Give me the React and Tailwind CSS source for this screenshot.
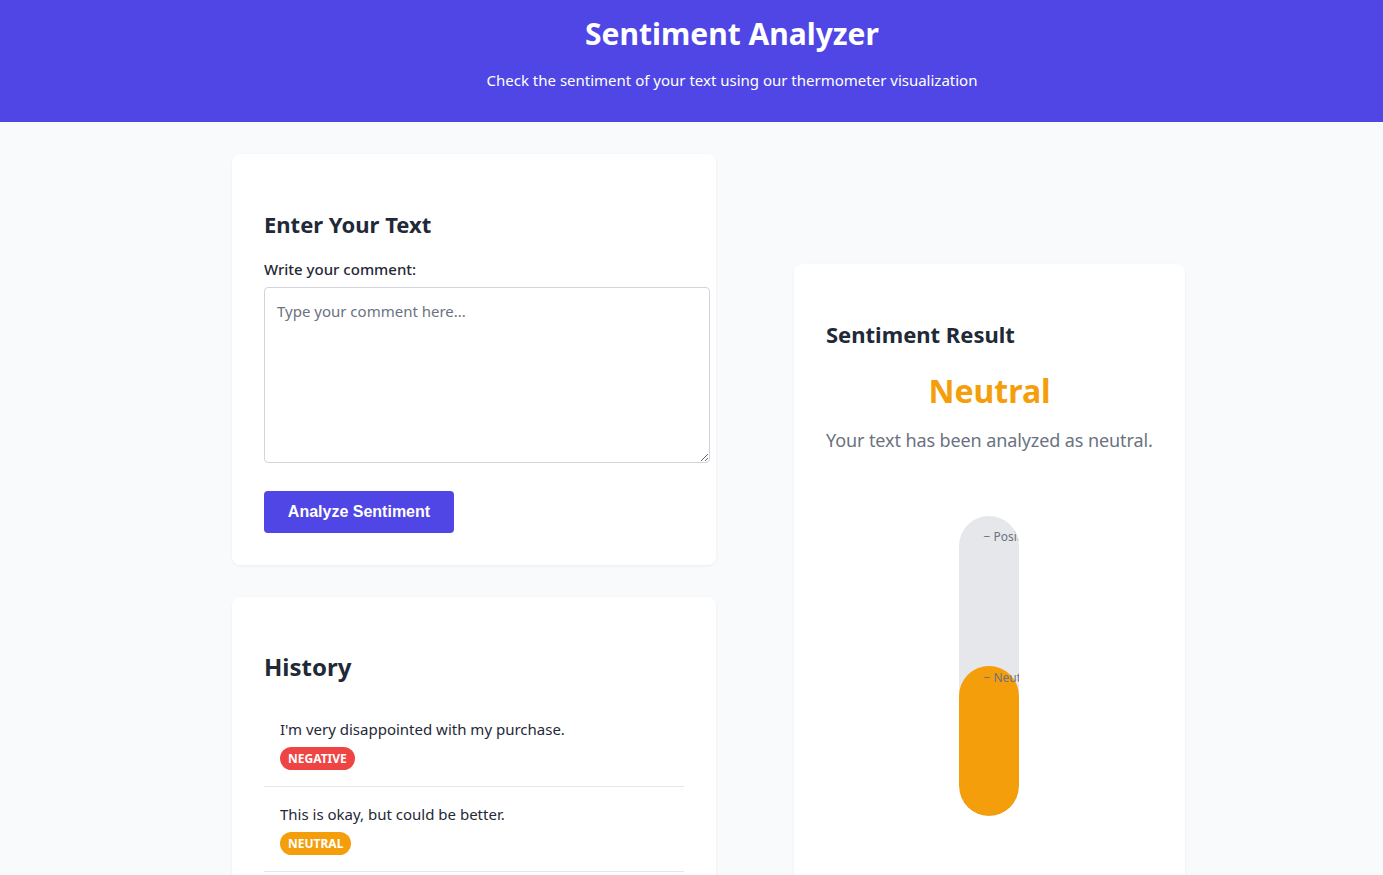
const font = { fontFamily: '"Noto Sans", "Open Sans", sans-serif' };

const history = [
  { text: "I'm very disappointed with my purchase.", label: "Negative", cls: "bg-[#ef4444]" },
  { text: "This is okay, but could be better.", label: "Neutral", cls: "bg-[#f59e0b]" },
];

function Thermometer() {
  return (
    <div className="relative left-[-1px] w-[60px] h-[300px] mx-auto rounded-full bg-[#e5e7eb] overflow-hidden">
      <div className="absolute bottom-0 left-0 w-full h-[150px] rounded-full bg-[#f59e0b]" />
      <span className="absolute left-[25px] top-[13px] text-[12px] leading-[16px] text-[#6b7280] whitespace-nowrap">
        − Positive
      </span>
      <span className="absolute left-[25px] top-[154px] text-[12px] leading-[16px] text-[#6b7280] whitespace-nowrap">
        − Neutral
      </span>
    </div>
  );
}

export default function App() {
  return (
    <div className="min-h-[875px] bg-[#f9fafb] text-[#1f2937]" style={font}>
      {/* Header */}
      <header className="bg-[#4f46e5] text-white text-center h-[122px] pt-[14px] pl-[81px]">
        <h1 className="text-[30px] leading-[40px] font-bold">Sentiment Analyzer</h1>
        <p className="mt-[14px] text-[15px] leading-[24px]">
          Check the sentiment of your text using our thermometer visualization
        </p>
      </header>

      <main className="flex items-start gap-[78px] pl-[232px] pt-[32px]">
        {/* Left column */}
        <div className="w-[484px] flex flex-col gap-[32px]">
          <section className="bg-white rounded-lg shadow-[0_1px_3px_rgba(0,0,0,0.06)] px-[32px] pt-[56px] pb-[32px]">
            <h2 className="text-[22px] leading-[28px] font-bold text-[#1f2937]">Enter Your Text</h2>
            <label className="block mt-[21px] text-[15px] leading-[20px] font-medium text-[#1f2937]">
              Write your comment:
            </label>
            <textarea
              className="block mt-[8px] w-[446px] h-[176px] border border-[#d1d5db] rounded px-[12px] py-[12px] text-[15px] placeholder:text-[#6b7280] resize-y outline-none"
              placeholder="Type your comment here..."
            />
            <button
              className="mt-[28px] w-[190px] h-[42px] bg-[#4f46e5] text-white rounded text-[16px] font-bold"
              style={{ fontFamily: '"Liberation Sans", Arial, sans-serif' }}
            >
              Analyze Sentiment
            </button>
          </section>

          <section className="bg-white rounded-lg shadow-[0_1px_3px_rgba(0,0,0,0.06)] px-[32px] pt-[54px] pb-[32px]">
            <h2 className="text-[24px] leading-[32px] font-bold text-[#1f2937]">History</h2>
            <ul className="mt-[19px]">
              {history.map((h) => (
                <li key={h.text} className="px-[16px] pt-[16px] pb-[16px] border-b border-[#e5e7eb]">
                  <p className="text-[15px] leading-[22px] text-[#1f2937]">{h.text}</p>
                  <span
                    className={`inline-block mt-[7px] px-[8px] rounded-full text-white text-[12px] leading-[23px] font-bold uppercase ${h.cls}`}
                  >
                    {h.label}
                  </span>
                </li>
              ))}
            </ul>
          </section>
        </div>

        {/* Right column */}
        <section className="mt-[110px] w-[391px] bg-white rounded-lg shadow-[0_1px_3px_rgba(0,0,0,0.06)] px-[32px] pt-[56px] pb-[80px]">
          <h2 className="text-[22px] leading-[28px] font-bold text-[#1f2937]">Sentiment Result</h2>
          <div className="mt-[23px] text-center text-[32px] leading-[40px] font-bold text-[#f59e0b]">
            Neutral
          </div>
          <p className="mt-[15px] text-[18px] leading-[28px] text-[#6b7280] whitespace-nowrap tracking-[-0.1px]">
            Your text has been analyzed as neutral.
          </p>
          <div className="mt-[62px]">
            <Thermometer />
          </div>
        </section>
      </main>
    </div>
  );
}
